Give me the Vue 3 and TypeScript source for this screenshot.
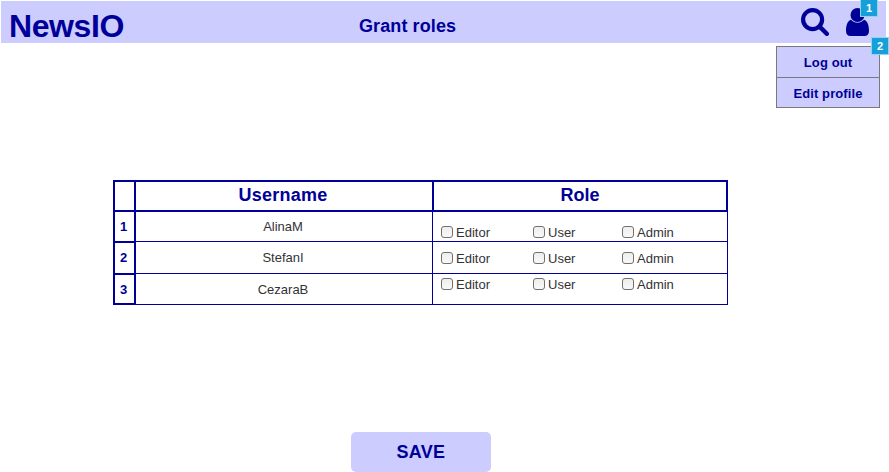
<script setup lang="ts">
import { ref } from 'vue'

interface UserRow {
  name: string
  roles: string[]
}

const roleNames: string[] = ['Editor', 'User', 'Admin']
const users = ref<UserRow[]>([
  { name: 'AlinaM', roles: [] },
  { name: 'StefanI', roles: [] },
  { name: 'CezaraB', roles: [] },
])
</script>

<template>
  <div class="page">
    <header class="topbar">
      <div class="brand">NewsIO</div>
      <h1 class="title">Grant roles</h1>
      <div class="actions">
        <svg class="search" viewBox="0 0 28 28">
          <circle cx="11.6" cy="11.6" r="9.5" fill="none" stroke="#000099" stroke-width="4.2" />
          <path d="M18.6 18.6L25.8 25.8" stroke="#000099" stroke-width="4.4" stroke-linecap="round" />
        </svg>
        <div class="account">
          <svg class="user" viewBox="0 0 23 28">
            <circle cx="11.5" cy="7" r="7" fill="#000099" />
            <path d="M5 11.8C1.4 12.8 0 17.5 0 23C0 26.2 1.8 28 4.5 28H18.5C21.2 28 23 26.2 23 23C23 17.5 21.6 12.8 18 11.8C16.2 13.7 14 14.8 11.5 14.8S6.8 13.7 5 11.8Z" fill="#000099" />
          </svg>
          <span class="badge first">1</span>
        </div>
      </div>
    </header>

    <nav class="menu">
      <a class="item">Log out</a>
      <a class="item">Edit profile</a>
      <span class="badge second">2</span>
    </nav>

    <section class="table">
      <div class="index">
        <div class="num head"></div>
        <div v-for="(user, i) in users" :key="user.name" class="num">{{ i + 1 }}</div>
      </div>
      <div class="main">
        <div class="row heading">
          <div class="name">Username</div>
          <div class="role">Role</div>
        </div>
        <div class="body">
          <div class="names">
            <div v-for="user in users" :key="user.name" class="name">{{ user.name }}</div>
          </div>
          <div class="choices">
            <div v-for="user in users" :key="user.name" class="role">
              <label v-for="role in roleNames" :key="role" class="choice">
                <input v-model="user.roles" type="checkbox" :value="role" />
                <span>{{ role }}</span>
              </label>
            </div>
          </div>
        </div>
      </div>
    </section>

    <button class="save" type="button">SAVE</button>
  </div>
</template>

<style>
body {
  margin: 0;
  background: #fff;
}
</style>

<style scoped>
.page {
  box-sizing: border-box;
  width: 889px;
  height: 472px;
  padding: 1px 0 0 1px;
  overflow: hidden;
  font-family: "Liberation Sans", Arial, sans-serif;
  font-size: 13px;
  color: #333;
}
.page * {
  box-sizing: border-box;
}
.topbar {
  display: grid;
  grid-template-columns: 358px 1fr 85px;
  width: 885px;
  height: 42px;
  background: #ccccff;
  color: #000099;
}
.brand {
  padding: 7px 0 0 8px;
  font-size: 32px;
  line-height: 36px;
  font-weight: bold;
  letter-spacing: -0.4px;
}
.title {
  margin: 0;
  padding-top: 15px;
  font-size: 18px;
  line-height: 21px;
  font-weight: bold;
  letter-spacing: 0.1px;
}
.actions {
  display: flex;
  gap: 17px;
  padding-top: 7px;
}
.search {
  display: block;
  width: 28px;
  height: 28px;
}
.account {
  position: relative;
  width: 23px;
  height: 28px;
}
.user {
  display: block;
  width: 23px;
  height: 28px;
}
.badge {
  position: absolute;
  width: 18px;
  height: 18px;
  border: 1px solid #8ed5f0;
  background: #169fd8;
  color: #fff;
  font: bold 11px/16px "Liberation Sans", Arial, sans-serif;
  text-align: center;
}
.first {
  top: -9px;
  left: 14px;
}
.second {
  top: -10px;
  right: -10px;
}
.menu {
  position: relative;
  width: 104px;
  height: 62px;
  margin: 3px 0 0 775px;
  border: 1px solid #797979;
  background: #ccccff;
  color: #000099;
}
.item {
  display: block;
  height: 30px;
  font-weight: bold;
  line-height: 31px;
  text-align: center;
  letter-spacing: 0.1px;
}
.item + .item {
  border-top: 1px solid #797979;
}
.table {
  display: flex;
  width: 615px;
  margin: 72px 0 0 112px;
}
.index {
  display: grid;
  grid-template-rows: 32px 31px 32px 30px;
  width: 23px;
}
.num {
  border: solid #000099;
  border-width: 0 2px 2px;
  color: #000099;
  font-weight: bold;
  line-height: 29px;
  text-align: center;
  padding-right: 2px;
}
.num.head {
  border-top-width: 2px;
}
.main {
  width: 592px;
}
.row {
  display: grid;
  grid-template-columns: 298px 294px;
}
.heading {
  height: 32px;
  border: solid #000099;
  border-width: 2px 0;
  color: #000099;
  font-size: 18px;
  font-weight: bold;
  line-height: 26px;
  text-align: center;
}
.heading .name,
.heading .role {
  border-right: 2px solid #000099;
}
.heading .name {
  padding-right: 2px;
  letter-spacing: 0.25px;
}
.body {
  display: grid;
  grid-template-columns: 297px 295px;
}
.names,
.choices {
  display: grid;
  grid-template-rows: 30px 32px 31px;
}
.names .name,
.choices .role {
  border: solid #000099;
  border-width: 0 1px 1px 0;
}
.names .name {
  padding-right: 2px;
  line-height: 30px;
  text-align: center;
}
.names .name + .name {
  line-height: 32px;
}
.choices .role {
  display: grid;
  grid-template-columns: 92px 89px 1fr;
  align-items: start;
  padding: 13px 0 0 8px;
}
.choices .role:nth-child(2) {
  padding-top: 9px;
}
.choices .role:nth-child(3) {
  padding-top: 3px;
}
.choice {
  display: flex;
  gap: 3px;
  height: 15px;
  line-height: 15px;
}
.choice input {
  appearance: none;
  width: 12px;
  height: 12px;
  margin: 1px 0 0;
  border: 1px solid #707070;
  border-radius: 3px;
  background: linear-gradient(#eeeeee, #f8f8f8);
}
.choice input:checked {
  background: #000099;
}
.save {
  display: block;
  width: 140px;
  height: 40px;
  margin: 127px 0 0 350px;
  padding: 0;
  border: 0;
  border-radius: 5px;
  background: #ccccff;
  color: #000099;
  font: bold 18px/40px "Liberation Sans", Arial, sans-serif;
  letter-spacing: 0.3px;
}
</style>
